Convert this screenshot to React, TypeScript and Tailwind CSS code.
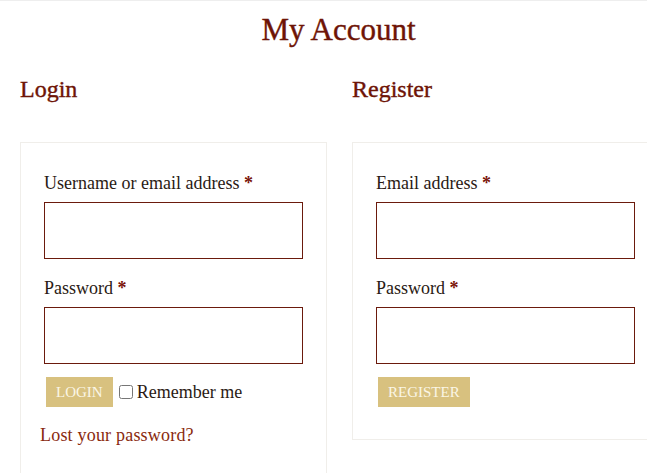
const serif = { fontFamily: '"Liberation Serif", "DejaVu Serif", serif' };

function Field({ label }: { label: string }) {
  return (
    <div className="mb-[17px]">
      <label className="block text-[18px] leading-[24px] text-[#2a1a14]">
        {label} <span className="font-bold text-[#7a1208]">*</span>
      </label>
      <input
        type="text"
        className="mt-[7px] block h-[57px] w-full border border-[#6b1a0c] bg-white outline-none"
      />
    </div>
  );
}

export default function App() {
  return (
    <div style={serif} className="h-[473px] w-[647px] overflow-hidden border-t border-[#eeeeee] bg-white">
      <h1 className="pl-[30px] pt-[12px] text-center text-[31px] leading-[34px] text-[#6e1406] [-webkit-text-stroke:0.4px_#6e1406]">
        My Account
      </h1>
      <div className="mt-[28px] grid grid-cols-[307px_307px] gap-[25px] pl-[20px]">
        <div>
          <h2 className="text-[24px] leading-[28px] text-[#6e1406] [-webkit-text-stroke:0.4px_#6e1406]">Login</h2>
          <div className="mt-[39px] h-[400px] border border-[#f0eeea] px-[23px] pt-[28px]">
            <Field label="Username or email address" />
            <Field label="Password" />
            <div className="-mt-[4px] flex items-center">
              <button className="ml-[2px] h-[30px] bg-[#d8c17f] px-[10px] text-[15px] uppercase text-[#fbf6e6]">
                Login
              </button>
              <input type="checkbox" className="ml-[6px] h-[14px] w-[14px]" />
              <span className="ml-[4px] text-[18px] text-[#2a1a14]">Remember me</span>
            </div>
            <a className="-ml-[4px] mt-[15px] block text-[18px] tracking-[0.2px] text-[#8a2a0e]">Lost your password?</a>
          </div>
        </div>
        <div>
          <h2 className="text-[24px] leading-[28px] text-[#6e1406] [-webkit-text-stroke:0.4px_#6e1406]">Register</h2>
          <div className="mt-[39px] h-[298px] border border-[#f0eeea] px-[23px] pt-[28px]">
            <Field label="Email address" />
            <Field label="Password" />
            <div className="-mt-[4px] flex">
              <button className="ml-[2px] h-[30px] bg-[#d8c17f] px-[10px] text-[15px] uppercase text-[#fbf6e6]">
                Register
              </button>
            </div>
          </div>
        </div>
      </div>
    </div>
  );
}
